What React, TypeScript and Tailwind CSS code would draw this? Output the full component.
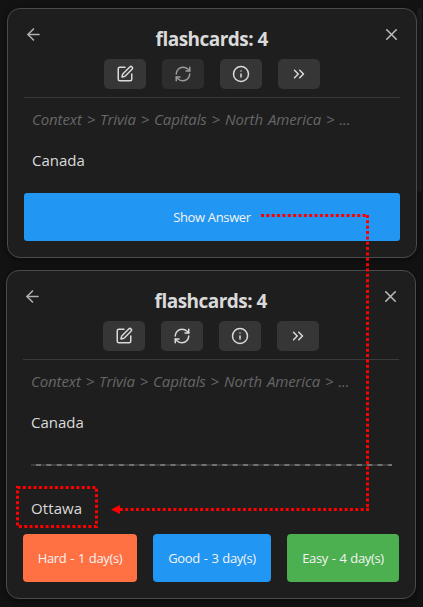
import type { ReactNode } from "react";
import { ArrowLeft, ChevronsRight, Info, RefreshCw, SquarePen, X } from "lucide-react";

function Tool({ children, dim = false }: { children: ReactNode; dim?: boolean }) {
  return (
    <button
      className={
        "flex h-[30px] w-[42px] items-center justify-center rounded-[5px] " +
        (dim ? "bg-[#2d2d2d] text-[#9a9a9a]" : "bg-[#363636] text-[#dadada]")
      }
    >
      {children}
    </button>
  );
}

function Card({ children, refreshDim = false, className }: { children: ReactNode; refreshDim?: boolean; className: string }) {
  return (
    <section
      className={
        "relative flex w-[410px] flex-col rounded-[13px] border border-[#4b4b4b] bg-[#1e1e1e] px-4 shadow-[0_2px_8px_rgba(0,0,0,0.5)] " +
        className
      }
    >
      <header className="flex h-[50px] items-start justify-between">
        <ArrowLeft className="mt-[15.5px] -ml-[0.5px] text-[#b0b0b0]" size={19} strokeWidth={2} />
        <h1 className="mt-4 -ml-px text-[19px] leading-[28px] font-bold tracking-[-0.52px] whitespace-nowrap text-[#dadada]">
          flashcards: 4
        </h1>
        <X className="mt-4 -mr-[1px] text-[#b8b8b8]" size={19} strokeWidth={2} />
      </header>
      <div className="flex h-[39px] justify-center gap-4 border-b border-[#3a3a3a]">
        <Tool>
          <SquarePen size={18} strokeWidth={2} />
        </Tool>
        <Tool dim={refreshDim}>
          <RefreshCw size={18} strokeWidth={2} />
        </Tool>
        <Tool>
          <Info size={18} strokeWidth={2} />
        </Tool>
        <Tool>
          <ChevronsRight size={18} strokeWidth={2} />
        </Tool>
      </div>
      <p className="mt-[9px] ml-2 h-6 text-[15px] leading-6 tracking-[-0.1px] whitespace-nowrap text-[#666666] italic [word-spacing:1.1px]">
        Context &gt; Trivia &gt; Capitals &gt; North America &gt; ...
      </p>
      <p className="mt-[17px] ml-2 text-[15px] leading-6 tracking-[0px] text-[#dadada]">Canada</p>
      {children}
    </section>
  );
}

const grade =
  "flex h-12 items-center justify-center rounded-[4px] pt-px text-[13px] font-medium tracking-[-0.35px] whitespace-nowrap text-[#f4f4f4] [word-spacing:0.8px]";

export default function App() {
  return (
    <main className="relative h-[607px] w-[423px] overflow-hidden bg-[#131313] pt-2 font-['Open_Sans','Noto_Sans',sans-serif]">
      <div className="absolute top-2 right-[1px] h-[184px] w-[5px] rounded-sm bg-[#1d1d1d]" />
      <Card className="ml-[7px] h-[250px]" refreshDim>
        <button className="mt-[21px] flex h-12 shrink-0 items-center justify-center rounded-[3px] bg-[#2196f3] pt-px text-[13px] font-medium tracking-[-0.35px] text-[#f4f4f4]">
          Show Answer
        </button>
      </Card>
      <Card className="mt-3 ml-[6px] h-[329px]">
        <svg className="mt-[30px] ml-2 h-[2px] w-[361px]" viewBox="0 0 361 2">
          <path d="M0 1H361" stroke="#3b3b3b" strokeWidth="2" />
          <path d="M5 1H361" stroke="#727272" strokeWidth="2" strokeDasharray="5 5.35" />
        </svg>
        <p className="mt-[30px] ml-2 text-[15px] leading-6 tracking-[0.1px] text-[#dadada]">Ottawa</p>
        <div className="mt-[14px] flex justify-between">
          <button className={grade + " w-[114px] bg-[#ff7043]"}>Hard - 1 day(s)</button>
          <button className={grade + " w-[118px] bg-[#2196f3]"}>Good - 3 day(s)</button>
          <button className={grade + " w-[112px] bg-[#4caf50]"}>Easy - 4 day(s)</button>
        </div>
      </Card>
      <svg className="pointer-events-none absolute inset-0" width="423" height="607" fill="none" stroke="#fe0000" strokeWidth="3">
        <path d="M261 215.5H366" strokeDasharray="3 2.35" />
        <path d="M367.5 215V510" strokeDasharray="3 2.35" />
        <path d="M369 509.5H120" strokeDasharray="3 2.35" />
        <path d="M17.5 487.5H96.5V526.5H17.5Z" strokeDasharray="3 2.35" />
        <path d="M111 509.5L120 505V514Z" fill="#fe0000" stroke="none" />
      </svg>
    </main>
  );
}
